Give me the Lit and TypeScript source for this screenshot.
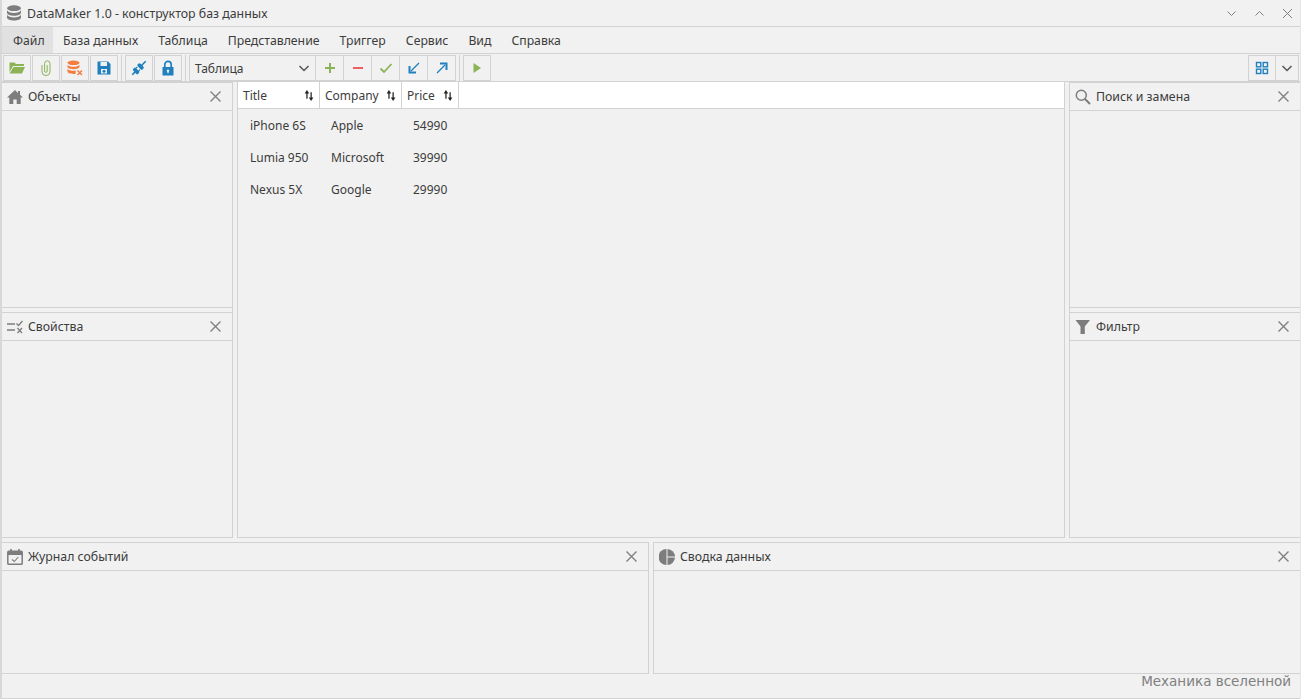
import { LitElement, css, html, svg } from "lit";
import { customElement, property } from "lit/decorators.js";

const GREEN = "#8cb356";
const BLUE = "#1f80bd";
const ORANGE = "#f47c3c";
const GRAY = "#7d7d7d";

// every icon is drawn in a 16x16 box
const icons: Record<string, unknown> = {
  db: svg`<g fill="${GRAY}"><ellipse cx="8" cy="3.2" rx="7" ry="2.900"/><path d="M1 5.200c1 1.900 3.700 2.700 7 2.700s6-.8 7-2.700v2.600c0 1.700-3.100 3-7 3s-7-1.300-7-3z"/><path d="M1 9.800c1 1.800 3.700 2.600 7 2.600s6-.8 7-2.600v2.600c0 1.700-3.100 3.100-7 3.100s-7-1.400-7-3.100z"/></g>`,
  home: svg`<path fill="${GRAY}" d="M8 1 0 8.500h2.300V15h4v-4.500h3.400V15h4V8.500H16l-3-2.800V2h-2v1.900z"/>`,
  props: svg`<g stroke="${GRAY}" fill="none" stroke-width="1.600"><path d="M0 5h8M0 11h8"/><path d="M9.500 4.500l2 2 4-4.500" stroke-width="1.300"/><path d="M10.500 9l4.500 5M15 9l-4.500 5" stroke-width="1.300"/></g>`,
  search: svg`<g stroke="${GRAY}" fill="none"><circle cx="6.300" cy="6.300" r="5" stroke-width="1.500"/><path d="M10 10l5 5" stroke-width="2"/></g>`,
  filter: svg`<path fill="${GRAY}" d="M.5 1h14.500L9.800 7.500v7.500H5.500V7.500z"/>`,
  journal: svg`<g fill="none" stroke="${GRAY}"><rect x=".8" y="2.300" width="14.400" height="13" rx="1" stroke-width="1.500"/><path d="M1 4.500h14" stroke-width="3"/><path d="M4 0v3M12 0v3" stroke-width="1.600"/><path d="M5 10.500l2.300 2 4-4.500" stroke-width="1.100"/></g>`,
  pie: svg`<g fill="${GRAY}"><path d="M7.500 0v16a8 8 0 0 1 0-16z"/><path d="M8.500 0a8 8 0 0 1 7.500 7.500H8.500z"/><path d="M8.500 8.500H16a8 8 0 0 1-7.500 7.500z"/></g>`,
  folder: svg`<path fill="${GREEN}" d="M.5 2.500h5L7 4h8v2H4L.5 12zM4.500 7H16l-3 6.500H.5z"/>`,
  clip: svg`<path fill="none" stroke="${GREEN}" stroke-width="1" d="M4 5v7a4 3.500 0 0 0 8 0V3.500a2.700 2.700 0 0 0-5.400 0V11a1.300 1.300 0 0 0 2.600 0V5"/>`,
  dbx: svg`<g fill="${ORANGE}"><ellipse cx="6.500" cy="2.800" rx="6" ry="2.300"/><path d="M.5 4.800c1 1.400 3.200 2 6 2s5-.6 6-2v2c0 1.300-2.700 2.400-6 2.400s-6-1.100-6-2.400z"/><path d="M.5 8.800c1 1.400 3.200 2 6 2 .8 0 1.500 0 2.200-.2v3.100c-.7.100-1.400.2-2.200.2-3.300 0-6-1-6-2.300z"/></g><path stroke="${ORANGE}" stroke-width="1.500" d="M10.500 10.500l4.500 4.500M15 10.500l-4.500 4.500"/>`,
  save: svg`<path fill="${BLUE}" fill-rule="evenodd" d="M1.500 1.500h10.500l2.500 2.500v10.500h-13zM4.500 2v4h6.500V2zM5 9v4.500h6V9z" /><circle cx="8" cy="11.300" r="1.500" fill="${BLUE}"/>`,
  plug: svg`<g fill="${BLUE}" transform="rotate(-45 8 8)"><rect x="-1.500" y="7.200" width="4" height="1.600"/><rect x="2" y="4.500" width="3.800" height="7" rx="1.500"/><rect x="5.500" y="5.500" width="2" height="1.200"/><rect x="5.500" y="9.300" width="2" height="1.200"/><rect x="8.300" y="4.500" width="3.800" height="7" rx="1.500"/><rect x="11.500" y="7.200" width="6" height="1.600"/></g>`,
  lock: svg`<path fill="none" stroke="${BLUE}" stroke-width="1.700" d="M4.800 7.500V4.500a3.200 3.200 0 0 1 6.400 0v3"/><path fill="${BLUE}" fill-rule="evenodd" d="M2.500 7h11v8.500h-11zM8 9.500a1.300 1.300 0 0 0-.6 2.400v1.400h1.200v-1.400A1.300 1.300 0 0 0 8 9.500z"/>`,
  plus: svg`<path stroke="${GREEN}" stroke-width="2" d="M8 3v10M3 8h10"/>`,
  minus: svg`<path stroke="#f25d5d" stroke-width="2" d="M3 8h10"/>`,
  check: svg`<path fill="none" stroke="${GREEN}" stroke-width="1.800" d="M2.500 8.500l3.500 3.500 7.500-8"/>`,
  in: svg`<path fill="none" stroke="${BLUE}" stroke-width="1.300" d="M13 3 5 11"/><path fill="none" stroke="${BLUE}" stroke-width="2" d="M3.500 6v6.500H10"/>`,
  out: svg`<path fill="none" stroke="${BLUE}" stroke-width="1.300" d="M3 13l8-8"/><path fill="none" stroke="${BLUE}" stroke-width="2" d="M6 3.500h6.500V10"/>`,
  play: svg`<path fill="${GREEN}" d="M4.500 3v10l7.500-5z"/>`,
  tiles: svg`<g fill="none" stroke="${BLUE}" stroke-width="1.400"><rect x="2.500" y="2.500" width="4.300" height="4.300"/><rect x="9.200" y="2.500" width="4.300" height="4.300"/><rect x="2.500" y="9.200" width="4.300" height="4.300"/><rect x="9.200" y="9.200" width="4.300" height="4.300"/></g>`,
  chevron: svg`<path fill="none" stroke="#555" stroke-width="1.500" d="M3.500 6l4.500 4.500L12.500 6"/>`,
};

const icon = (name: string, size = 16) =>
  html`<svg width="${size}" height="${size}" viewBox="0 0 16 16">${icons[name]}</svg>`;

@customElement("dock-panel")
export class DockPanel extends LitElement {
  @property() heading = "";
  @property() icon = "";

  static styles = css`
    :host {
      display: flex;
      flex-direction: column;
      min-height: 0;
      min-width: 0;
      border-top: 1px solid #d2d2d2;
      border-bottom: 1px solid #d2d2d2;
    }
    .head {
      display: flex;
      align-items: center;
      height: 27px;
      flex: none;
      padding: 0 11px 0 5px;
      border-bottom: 1px solid #d2d2d2;
      font-size: 12.3px;
      color: #3c3c3c;
    }
    .head svg {
      display: block;
      flex: none;
    }
    .title {
      margin-left: 5px;
      flex: 1;
    }
    .close {
      width: 11px;
      height: 11px;
    }
  `;

  render() {
    return html`
      <div class="head">
        ${icon(this.icon)}
        <span class="title">${this.heading}</span>
        <svg class="close" viewBox="0 0 11 11">
          <path stroke="#808080" stroke-width="1.400" d="M.5 .5l10 10M10.500 .5l-10 10" />
        </svg>
      </div>
    `;
  }
}

const menu = ["Файл", "База данных", "Таблица", "Представление", "Триггер", "Сервис", "Вид", "Справка"];
const rows = [
  ["iPhone 6S", "Apple", "54990"],
  ["Lumia 950", "Microsoft", "39990"],
  ["Nexus 5X", "Google", "29990"],
];
const columns = [
  { name: "Title", width: 82, inset: 12 },
  { name: "Company", width: 82, inset: 11 },
  { name: "Price", width: 57, inset: 11 },
];

@customElement("app-root")
export class AppRoot extends LitElement {
  static styles = css`
    :host {
      display: flex;
      flex-direction: column;
      box-sizing: border-box;
      height: 100vh;
      width: 100%;
      overflow: hidden;
      background: #f1f1f1;
      border-left: 2px solid #d8d8d8;
      border-right: 1px solid #e6e6e6;
      font-family: "Noto Sans", "Open Sans", sans-serif;
      font-size: 12px;
      color: #3c3c3c;
    }
    svg {
      display: block;
    }
    .titlebar {
      display: flex;
      align-items: center;
      height: 26px;
      flex: none;
      padding: 0 6px 0 4px;
      border-bottom: 1px solid #d2d2d2;
    }
    .titlebar .name {
      flex: 1;
      margin-left: 5px;
      font-size: 12.35px;
    }
    .winbtn {
      display: flex;
      gap: 17px;
      margin-right: 1px;
    }
    .menu {
      display: flex;
      height: 26px;
      flex: none;
      border-bottom: 1px solid #d2d2d2;
      font-size: 12.25px;
    }
    .menu span {
      display: flex;
      align-items: center;
      padding: 0 10px;
    }
    .menu .on {
      background: #e1e1e1;
      padding: 0 10px 0 11px;
      width: 30px;
    }
    .toolbar {
      display: flex;
      align-items: center;
      height: 26px;
      flex: none;
      padding: 1px 1px 0 1px;
      border-bottom: 1px solid #d2d2d2;
    }
    .group {
      display: flex;
      gap: 1px;
    }
    .joined {
      gap: 0;
    }
    .joined .btn + .btn {
      border-left: none;
    }
    .btn {
      display: flex;
      align-items: center;
      justify-content: center;
      box-sizing: border-box;
      width: 28px;
      height: 26px;
      border: 1px solid #d2d2d2;
    }
    .select + .btn {
      width: 29px;
    }
    .btn.narrow {
      width: 23px;
    }
    .sep {
      width: 1px;
      height: 26px;
      background: #d2d2d2;
      margin: 0 3px;
    }
    .select {
      display: flex;
      align-items: center;
      justify-content: space-between;
      box-sizing: border-box;
      width: 126px;
      height: 26px;
      padding: 0 3px 0 5px;
      border: 1px solid #d2d2d2;
      border-right: none;
    }
    .spacer {
      flex: 1;
    }
    .upper {
      display: grid;
      grid-template-columns: 231px 828px 231px;
      column-gap: 4px;
      flex: 1;
      min-height: 0;
      margin-bottom: 4px;
    }
    .side {
      display: grid;
      grid-template-rows: 226px 1fr;
      row-gap: 4px;
      min-height: 0;
    }
    .left {
      border-right: 1px solid #d2d2d2;
    }
    .right {
      border-left: 1px solid #d2d2d2;
    }
    .grid {
      display: flex;
      flex-direction: column;
      border-left: 1px solid #d2d2d2;
      border-right: 1px solid #d2d2d2;
      border-bottom: 1px solid #d2d2d2;
    }
    .thead {
      display: flex;
      height: 26px;
      flex: none;
      background: #fff;
      border-bottom: 1px solid #d2d2d2;
    }
    .th {
      display: flex;
      align-items: center;
      justify-content: space-between;
      box-sizing: border-box;
      padding: 0 5px 0 5px;
      border-right: 1px solid #d2d2d2;
    }
    .row {
      display: flex;
      height: 32px;
      align-items: center;
    }
    .td {
      box-sizing: border-box;
    }
    .lower {
      display: grid;
      grid-template-columns: 647px 647px;
      column-gap: 4px;
      height: 132px;
      flex: none;
    }
    .lower dock-panel:first-child {
      border-right: 1px solid #d2d2d2;
    }
    .lower dock-panel:last-child {
      border-left: 1px solid #d2d2d2;
    }
    .status {
      height: 25px;
      flex: none;
      padding-right: 9px;
      box-sizing: border-box;
      border-bottom: 1px solid #d2d2d2;
      text-align: right;
      line-height: 15px;
      font-family: "DejaVu Sans", sans-serif;
      font-size: 13.5px;
      color: #808080;
    }
  `;

  private _button(name: string, cls = "") {
    return html`<div class="btn ${cls}">${icon(name)}</div>`;
  }

  private _sortArrows() {
    return html`<svg width="10" height="13" viewBox="0 0 12 14">
      <path fill="#222" d="M3.500 .5L.8 4.500h2V11h1.500V4.500h2zM8.500 13.500L5.800 9.500h2V3h1.500v6.500h2z" />
    </svg>`;
  }

  render() {
    return html`
      <div class="titlebar">
        ${icon("db")}
        <span class="name">DataMaker 1.0 - конструктор баз данных</span>
        <div class="winbtn">
          <svg width="11" height="11" viewBox="0 0 11 11"><path fill="none" stroke="#808080" d="M1.500 3.500l4 4 4-4" /></svg>
          <svg width="11" height="11" viewBox="0 0 11 11"><path fill="none" stroke="#808080" d="M1.500 7.500l4-4 4 4" /></svg>
          <svg width="11" height="11" viewBox="0 0 11 11"><path stroke="#808080" d="M1 1l9 9M10 1l-9 9" /></svg>
        </div>
      </div>

      <div class="menu">
        ${menu.map((item, i) => html`<span class=${i === 0 ? "on" : ""}>${item}</span>`)}
      </div>

      <div class="toolbar">
        <div class="group">
          ${this._button("folder")}${this._button("clip")}${this._button("dbx")}${this._button("save")}
        </div>
        <div class="sep"></div>
        <div class="group">${this._button("plug")}${this._button("lock")}</div>
        <div class="sep"></div>
        <div class="group joined">
          <div class="select">Таблица ${icon("chevron")}</div>
          ${this._button("plus")}${this._button("minus")}${this._button("check")}${this._button("in")}${this._button("out")}
        </div>
        <div class="sep"></div>
        ${this._button("play")}
        <div class="spacer"></div>
        <div class="group joined">
          ${this._button("tiles")}${this._button("chevron", "narrow")}
        </div>
      </div>

      <div class="upper">
        <div class="side left">
          <dock-panel heading="Объекты" icon="home"></dock-panel>
          <dock-panel heading="Свойства" icon="props"></dock-panel>
        </div>
        <div class="grid">
          <div class="thead">
            ${columns.map(
              (c) => html`<div class="th" style="width:${c.width}px">${c.name} ${this._sortArrows()}</div>`
            )}
          </div>
          ${rows.map(
            (r) => html`<div class="row">
              ${r.map(
                (v, i) => html`<div class="td" style="width:${columns[i].width}px;padding-left:${columns[i].inset}px">${v}</div>`
              )}
            </div>`
          )}
        </div>
        <div class="side right">
          <dock-panel heading="Поиск и замена" icon="search"></dock-panel>
          <dock-panel heading="Фильтр" icon="filter"></dock-panel>
        </div>
      </div>

      <div class="lower">
        <dock-panel heading="Журнал событий" icon="journal"></dock-panel>
        <dock-panel heading="Сводка данных" icon="pie"></dock-panel>
      </div>

      <div class="status">Механика вселенной</div>
    `;
  }
}
